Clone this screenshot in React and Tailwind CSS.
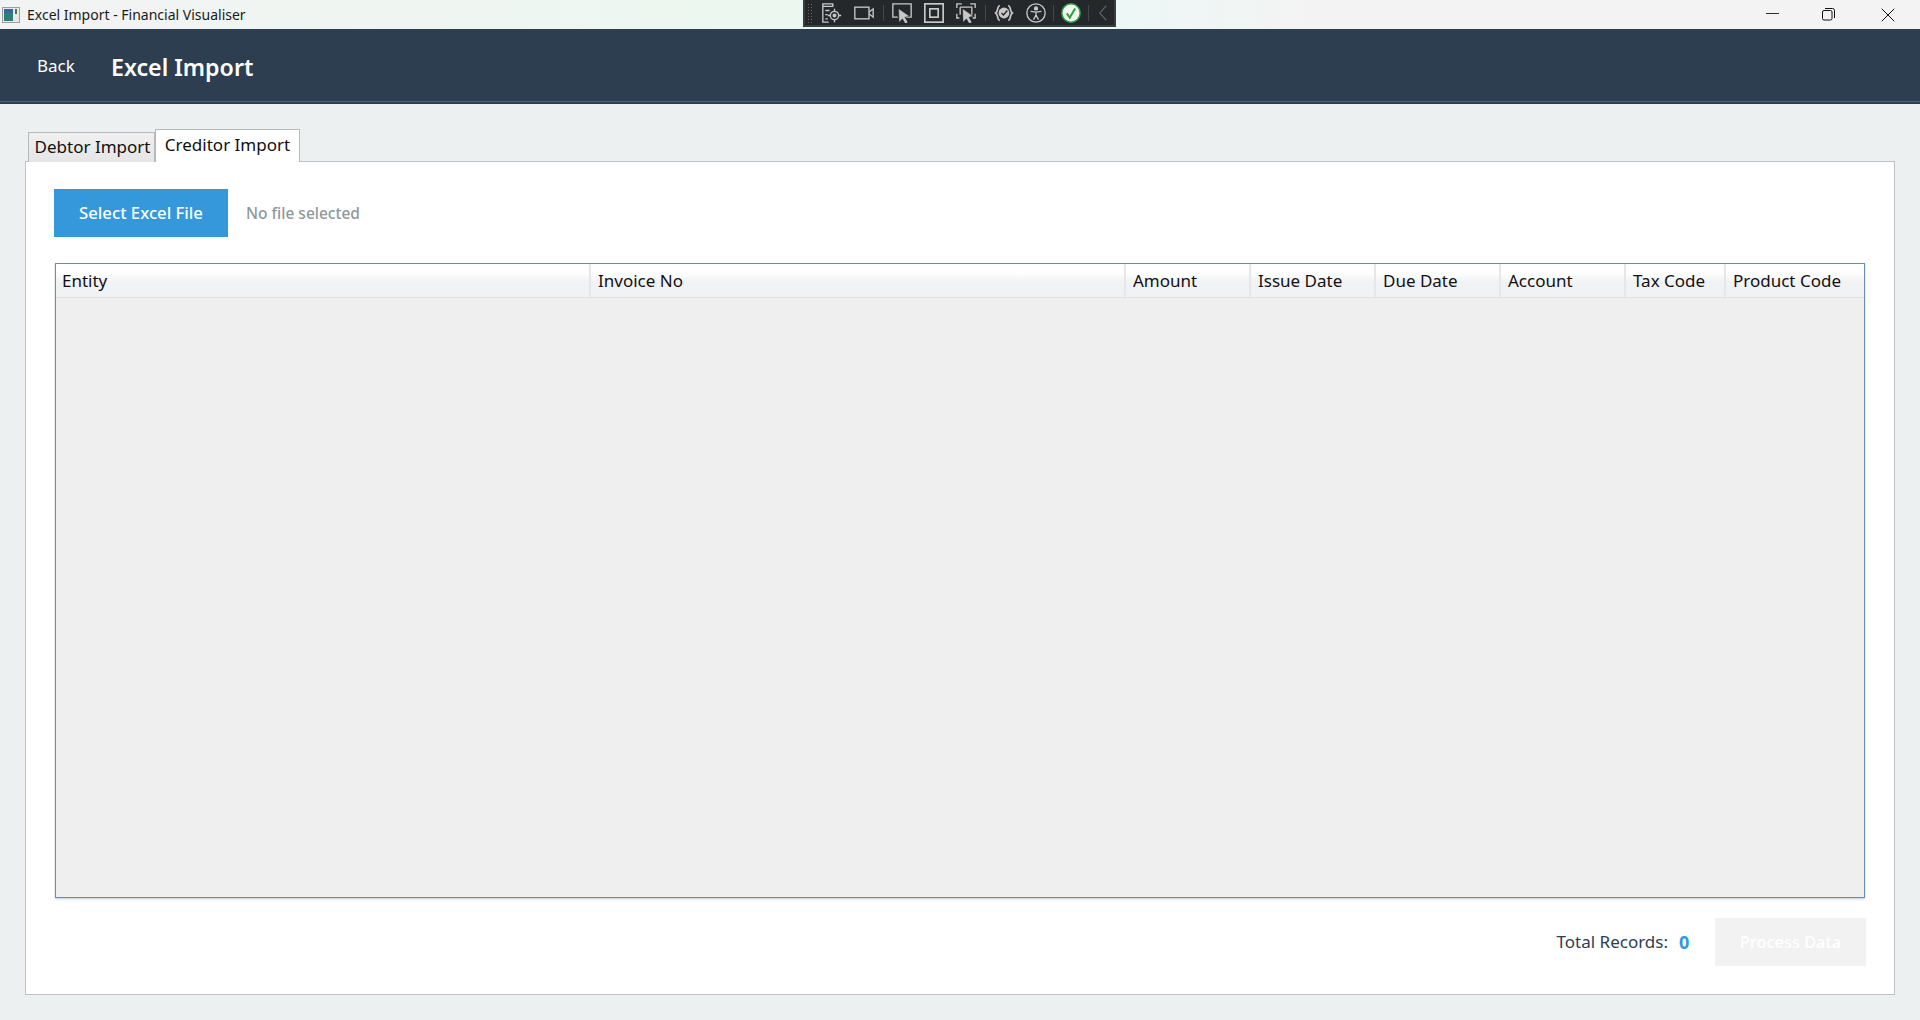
import { Minus, X } from "lucide-react";

const font = "font-['Noto_Sans','Open_Sans',sans-serif]";

const columns = [
  { label: "Entity", width: "w-[535px]" },
  { label: "Invoice No", width: "w-[535px]" },
  { label: "Amount", width: "w-[125px]" },
  { label: "Issue Date", width: "w-[125px]" },
  { label: "Due Date", width: "w-[125px]" },
  { label: "Account", width: "w-[125px]" },
  { label: "Tax Code", width: "w-[100px]" },
  { label: "Product Code", width: "flex-1" },
];

const AppIcon = () => (
  <svg width="18" height="16" viewBox="0 0 18 16" className="shrink-0">
    <rect x="0.5" y="0.5" width="17" height="15" fill="#e8e8e8" stroke="#9aa0a6" />
    <rect x="2" y="2" width="9" height="12" fill="#2f7f78" />
    <rect x="2" y="2" width="9" height="4" fill="#3a6a94" />
    <rect x="13" y="2" width="2" height="5" fill="#4a7a4a" />
  </svg>
);

const ToolbarIcon = ({ children, className }) => (
  <svg viewBox="0 0 24 24" fill="none" stroke="#c8c8c8" strokeWidth="1.6" className={`h-[20px] w-[20px] shrink-0 ${className}`}>
    {children}
  </svg>
);

const Sep = ({ className }) => <div className={`h-[16px] w-px bg-[#44484c] ${className}`} />;

const Arrow = ({ x = 0, y = 0 }) => (
  <path
    transform={`translate(${x} ${y})`}
    d="M0 0l13 9-5.5 1 3.5 6-3 2-3.5-6-4 4z"
    fill="#c8c8c8"
    stroke="#25282b"
    strokeWidth="0.5"
  />
);

const DebugToolbar = () => (
  <div className="absolute left-[803px] top-0 flex h-[27px] w-[313px] items-center border-2 border-t-0 border-[#3a3d40] bg-[#25282b] pl-[2px]">
    <div className="h-[20px] w-[6px] shrink-0 bg-[radial-gradient(#666_1px,transparent_1px)] bg-[length:3px_3px]" />
    {/* live visual tree */}
    <ToolbarIcon className="ml-[9px]">
      <path d="M1 1h12v3H1zM1 4v19h7M4 9h5M4 14h3M4 19h3" />
      <circle cx="15" cy="15" r="5" />
      <circle cx="15" cy="15" r="1.6" fill="#c8c8c8" />
      <path d="M15 7v3.5M15 19.5V23M7 15h3.5M19.5 15H23" />
    </ToolbarIcon>
    {/* record */}
    <ToolbarIcon className="ml-[12px]">
      <rect x="1" y="5" width="17" height="14" />
      <path d="M18 11l5-4v10l-5-4" />
    </ToolbarIcon>
    <Sep className="ml-[9px]" />
    {/* select element */}
    <ToolbarIcon className="ml-[8px]">
      <path d="M7 17H1V1h22v16h-6" />
      <Arrow x={8} y={7} />
    </ToolbarIcon>
    {/* layout adorners */}
    <ToolbarIcon className="ml-[12px]">
      <rect x="1" y="1" width="22" height="22" strokeWidth="2" />
      <rect x="7" y="7" width="10" height="10" strokeWidth="2" />
    </ToolbarIcon>
    {/* track focus */}
    <ToolbarIcon className="ml-[12px]">
      <path d="M1 6V1h6M17 1h6v5M1 13v5h3M23 13v5h-3M5 5h14v9M5 5v9" />
      <Arrow x={8} y={7} />
    </ToolbarIcon>
    <Sep className="ml-[9px]" />
    <ToolbarIcon className="ml-[8px]">
      <path d="M7 3C3 4 6 9 2 12c4 3 1 8 5 9M17 3c4 1 1 6 5 9-4 3-1 8-5 9" strokeWidth="2" />
      <circle cx="12" cy="12" r="6.5" fill="#c8c8c8" stroke="none" />
      <path d="M9 12l2.3 2.3L16 9" stroke="#25282b" strokeWidth="1.6" />
    </ToolbarIcon>
    <ToolbarIcon className="ml-[12px]">
      <circle cx="12" cy="12" r="11" />
      <circle cx="12" cy="6.5" r="1.8" fill="#c8c8c8" />
      <path d="M5.5 10l6.5 1 6.5-1M12 11v3.5M12 14.5L9 20M12 14.5l3 5.5" />
    </ToolbarIcon>
    <Sep className="ml-[7px]" />
    <svg viewBox="0 0 24 24" className="ml-[7px] h-[20px] w-[20px] shrink-0">
      <circle cx="12" cy="12" r="11" fill="#f2f7f2" stroke="#2ea043" strokeWidth="1.8" />
      <path d="M7 12.5l3.5 5L17 6.5" fill="none" stroke="#2ea043" strokeWidth="2.4" />
    </svg>
    <Sep className="ml-[7px]" />
    <svg viewBox="0 0 12 20" fill="none" stroke="#5a5e62" strokeWidth="1.6" className="ml-[9px] h-[16px] w-[10px] shrink-0">
      <path d="M10 1L2 10l8 9" />
    </svg>
  </div>
);

const TitleBar = () => (
  <div className="relative flex h-[29px] shrink-0 items-center bg-[linear-gradient(90deg,#f2f3f3_0%,#ecf7f0_38%,#ecf7f5_58%,#f3f3f3_68%)] pl-[2px]">
    <AppIcon />
    <span className="ml-[7px] font-['Noto_Sans',sans-serif] text-[14px] text-[#1a1a1a]">Excel Import - Financial Visualiser</span>
    <DebugToolbar />
    <div className="ml-auto mr-[3px] flex items-center">
      <div className="flex w-[58px] justify-center pb-[3px]"><Minus size={21} strokeWidth={1} color="#111" /></div>
      <div className="flex w-[58px] justify-center pr-[3px]">
        <svg width="13" height="13" viewBox="0 0 13 13" fill="none" stroke="#111" strokeWidth="1">
          <rect x="0.5" y="2.5" width="9.5" height="9.5" rx="1.5" />
          <path d="M3 .5h7.5a2 2 0 012 2V10" />
        </svg>
      </div>
      <div className="flex w-[58px] justify-center"><X size={24} strokeWidth={1} color="#111" /></div>
    </div>
  </div>
);

const Header = () => (
  <div className="h-[75px] shrink-0 bg-[#2c3e50] pb-[2px]">
    <div className="flex h-full items-center border-b border-[#4f6478] pl-[37px]">
      <span className="w-[74px] pt-[1px] text-[17px] text-white">Back</span>
      <h1 className="pt-[4px] text-[23.2px] font-semibold text-white">Excel Import</h1>
    </div>
  </div>
);

const App = () => {
  return (
    <div className={`flex h-screen w-full flex-col overflow-hidden bg-[#ecf0f1] ${font}`}>
      <TitleBar />
      <Header />

      <main className="flex flex-1 flex-col px-[25px] pb-[25px] pt-[25px]">
        {/* Tabs */}
        <div className="relative z-10 -mb-px flex h-[33px] items-end pl-[3px]">
          <div className="flex h-[30px] w-[127px] items-center justify-center border border-b-0 border-[#b5b9bc] bg-[linear-gradient(#f0f0f0,#e5e5e5)] pb-[1px] pl-[2px] text-[17px] text-[#111]">
            Debtor Import
          </div>
          <div className="flex h-[33px] w-[145px] items-center justify-center border border-b-0 border-[#b5b9bc] bg-white pb-[2px] text-[17px] text-[#111]">
            Creditor Import
          </div>
        </div>

        {/* Panel */}
        <div className="flex flex-1 flex-col border border-[#bdc3c7] bg-white pb-[28px] pl-[28px] pr-[28px] pt-[27px]">
          <div className="flex items-center">
            <button className="h-[48px] w-[174px] bg-[#3498db] text-[16.7px] font-medium text-white">Select Excel File</button>
            <span className="ml-[18px] pt-[1px] text-[15.5px] font-medium text-[#8f9799]">No file selected</span>
          </div>

          <div className="ml-[1px] mr-[1px] mt-[26px] flex min-h-0 flex-1 flex-col border border-[#6c8cb0] bg-[#efefef] shadow-[0_1px_2px_#c8c8c8]">
            <div className="flex h-[34px] border-b border-[#e0e0e0] bg-[linear-gradient(#ffffff_0%,#ffffff_25%,#f1f2f4_55%,#f1f2f4_100%)]">
              {columns.map((col, i) => (
                <div
                  key={col.label}
                  className={`flex items-center pt-[1px] text-[17px] text-[#111] ${col.width} ${i === 0 ? "pl-[6px]" : "pl-[7px]"} ${i < columns.length - 1 ? "border-r-2 border-[#e6e7e8]" : ""}`}
                >
                  {col.label}
                </div>
              ))}
            </div>
          </div>

          <div className="mt-[20px] flex items-center justify-end">
            <span className="text-[17px] text-[#2c3e50]">Total Records:</span>
            <span className="ml-[11px] w-[36px] text-[18px] font-bold text-[#3498db]">0</span>
            <button className="h-[48px] w-[151px] bg-[#f2f2f2] text-[16.4px] font-medium text-white">Process Data</button>
          </div>
        </div>
      </main>
    </div>
  );
};

export default App;
